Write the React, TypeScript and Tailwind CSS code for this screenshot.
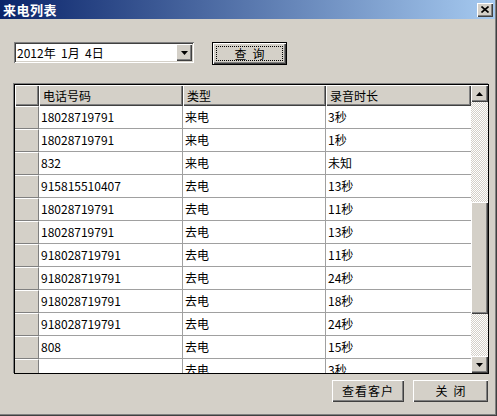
import React from "react";

const rows: [string, string, string][] = [
  ["18028719791", "来电", "3秒"],
  ["18028719791", "来电", "1秒"],
  ["832", "来电", "未知"],
  ["915815510407", "去电", "13秒"],
  ["18028719791", "去电", "11秒"],
  ["18028719791", "去电", "13秒"],
  ["918028719791", "去电", "11秒"],
  ["918028719791", "去电", "24秒"],
  ["918028719791", "去电", "18秒"],
  ["918028719791", "去电", "24秒"],
  ["808", "去电", "15秒"],
  ["", "去电", "3秒"],
];

const raised =
  "shadow-[inset_1px_1px_0_#ffffff,inset_-1px_-1px_0_#404040,inset_-2px_-2px_0_#808080]";

function Arrow({ up }: { up?: boolean }) {
  return (
    <svg width="7" height="4" viewBox="0 0 7 4">
      {up ? (
        <polygon points="3.5,0 7,4 0,4" fill="#000" />
      ) : (
        <polygon points="0,0 7,0 3.5,4" fill="#000" />
      )}
    </svg>
  );
}

export default function App() {
  return (
    <div
      className="w-[497px] h-[416px] bg-[#d4d0c8] flex flex-col shadow-[inset_-1px_-1px_0_#404040,inset_-2px_-2px_0_#808080] overflow-hidden"
      style={{ fontFamily: '"Noto Sans CJK SC", "Liberation Sans", sans-serif' }}
    >
      {/* title bar */}
      <div className="h-[19px] mr-[2px] flex items-center justify-between pl-[3px] pr-[2px] bg-[linear-gradient(to_right,#0a246a,#a6caf0)]">
        <span className="text-white font-bold text-[13px] leading-none tracking-[0.5px]">来电列表</span>
        <div className={`w-[16px] h-[14px] bg-[#d4d0c8] flex items-center justify-center ${raised}`}>
          <svg width="8" height="7" viewBox="0 0 8 7">
            <path d="M0.5 0.5 L7.5 6.5 M7.5 0.5 L0.5 6.5" stroke="#000" strokeWidth="1.6" />
          </svg>
        </div>
      </div>

      {/* top controls */}
      <div className="flex items-start mt-[23px] ml-[14px]">
        <div className="w-[180px] h-[21px] bg-white flex items-center shadow-[inset_1px_1px_0_#808080,inset_-1px_-1px_0_#ffffff,inset_2px_2px_0_#404040,inset_-2px_-2px_0_#d4d0c8]">
          <span className="ml-[3px] text-[12px] leading-none text-black whitespace-pre">2012年  1月  4日</span>
          <div className={`ml-auto mr-[2px] w-[16px] h-[17px] bg-[#d4d0c8] flex items-center justify-center ${raised}`}>
            <Arrow />
          </div>
        </div>
        <div className="ml-[18px] w-[75px] h-[23px] border border-black bg-[#d4d0c8] relative flex items-center justify-center shadow-[inset_1px_1px_0_#ffffff,inset_-1px_-1px_0_#404040,inset_-2px_-2px_0_#808080]">
          <div className="absolute left-[3px] top-[3px] right-[3px] bottom-[3px] border border-dotted border-black" />
          <span className="text-[12px] leading-none text-black tracking-[6px] pl-[6px]">查询</span>
        </div>
      </div>

      {/* table */}
      <div className="mt-[19px] ml-[14px] w-[475px] h-[290px] border border-black flex shadow-[-1px_-1px_0_#808080]">
        <div className="w-[456px] h-full bg-white overflow-hidden flex flex-col">
          <div className="flex h-[21px] shrink-0 bg-[#d4d0c8] text-[12px] text-black">
            <div className={`w-[24px] ${raised}`} />
            <div className={`w-[144px] flex items-center pl-[4px] ${raised}`}>电话号码</div>
            <div className={`w-[143px] flex items-center pl-[4px] ${raised}`}>类型</div>
            <div className={`w-[145px] flex items-center pl-[4px] ${raised}`}>录音时长</div>
          </div>
          {rows.map((r, i) => (
            <div key={i} className="flex h-[23px] shrink-0 text-[12px] text-black">
              <div className="w-[24px] bg-[#d4d0c8] border-t border-t-white border-b border-b-[#808080] border-r border-r-[#808080]" />
              <div className="w-[144px] flex items-center pl-[2px] border-b border-r border-[#a0a0a0]">{r[0]}</div>
              <div className="w-[143px] flex items-center pl-[2px] border-b border-r border-[#a0a0a0]">{r[1]}</div>
              <div className="w-[145px] flex items-center pl-[2px] border-b border-[#a0a0a0]">{r[2]}</div>
            </div>
          ))}
        </div>
        {/* scrollbar */}
        <div className="w-[17px] h-full flex flex-col bg-[repeating-conic-gradient(#d4d0c8_0_25%,#ffffff_0_50%)] bg-[length:2px_2px]">
          <div className={`h-[17px] shrink-0 bg-[#d4d0c8] flex items-center justify-center ${raised}`}>
            <Arrow up />
          </div>
          <div className="h-[100px] shrink-0" />
          <div className={`h-[112px] shrink-0 bg-[#d4d0c8] ${raised}`} />
          <div className="flex-1" />
          <div className={`h-[17px] shrink-0 bg-[#d4d0c8] flex items-center justify-center ${raised}`}>
            <Arrow />
          </div>
        </div>
      </div>

      {/* bottom buttons */}
      <div className="flex mt-[6px] ml-[332px] gap-[9px]">
        <div className={`w-[72px] h-[22px] bg-[#d4d0c8] flex items-center justify-center text-[12px] text-black tracking-[1px] ${raised}`}>
          查看客户
        </div>
        <div className={`w-[75px] h-[22px] bg-[#d4d0c8] flex items-center justify-center text-[12px] text-black tracking-[6px] pl-[6px] ${raised}`}>
          关闭
        </div>
      </div>
    </div>
  );
}
